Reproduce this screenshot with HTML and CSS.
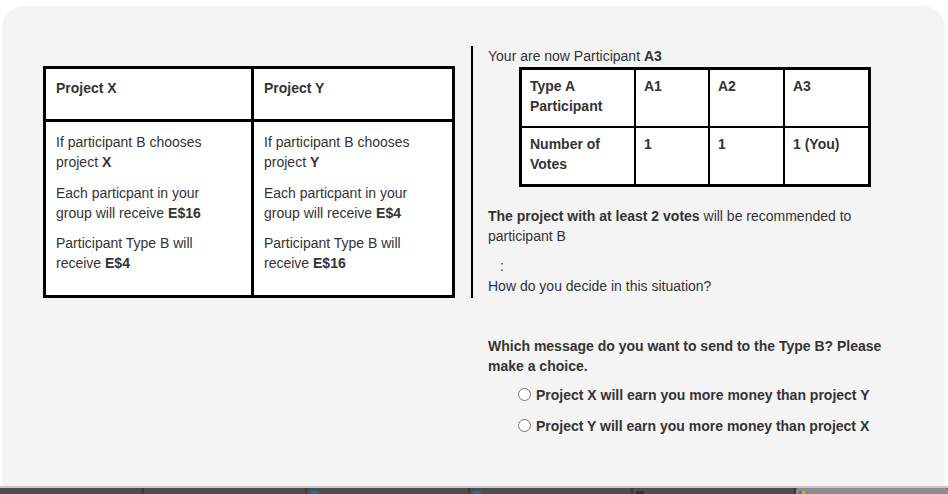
FILE: index.html
```html
<!DOCTYPE html>
<html>
<head>
<meta charset="utf-8">
<link rel="stylesheet" href="styles.css">
</head>
<body>
<div class="panel">
  <div class="left">
    <table class="proj">
      <tr class="head">
        <th class="c1">Project X</th>
        <th>Project Y</th>
      </tr>
      <tr>
        <td class="c1">
          <p>If participant B chooses project <b>X</b></p>
          <p>Each particpant in your group will receive <b>E$16</b></p>
          <p>Participant Type B will receive <b>E$4</b></p>
        </td>
        <td>
          <p>If participant B chooses project <b>Y</b></p>
          <p>Each particpant in your group will receive <b>E$4</b></p>
          <p>Participant Type B will receive <b>E$16</b></p>
        </td>
      </tr>
    </table>
  </div>
  <div class="right">
    <div class="line">Your are now Participant <b>A3</b></div>
    <table class="votes">
      <tr>
        <th class="v1">Type A Participant</th>
        <th class="v2">A1</th>
        <th class="v3">A2</th>
        <th class="v4">A3</th>
      </tr>
      <tr>
        <th>Number of Votes</th>
        <th>1</th>
        <th>1</th>
        <th>1 (You)</th>
      </tr>
    </table>
    <p class="rec"><b>The project with at least 2 votes</b> will be recommended to participant B</p>
    <div class="colon">:</div>
    <div class="line">How do you decide in this situation?</div>
    <p class="question">Which message do you want to send to the Type B? Please make a choice.</p>
    <label class="choice"><input type="radio" name="msg"><span>Project X will earn you more money than project Y</span></label>
    <label class="choice"><input type="radio" name="msg"><span>Project Y will earn you more money than project X</span></label>
  </div>
</div>
<div class="taskbar">
  <div class="tab"></div>
  <div class="tab"></div>
  <div class="tab"><i class="ico"></i></div>
  <div class="tab"><i class="ico"></i></div>
  <div class="tab"><i class="ico dark"></i></div>
  <div class="tab active"><i class="ico multi"></i></div>
</div>
</body>
</html>
```

FILE: styles.css
```css
html, body {
  margin: 0;
  padding: 0;
  background: #ffffff;
  font-family: "Liberation Sans", Arial, sans-serif;
  font-size: 14px;
  line-height: 20px;
  color: #333333;
  overflow: hidden;
}

.panel {
  margin: 6px 3px 0 2px;
  height: 480px;
  background: #f4f4f4;
  border-radius: 22px 22px 0 0;
  box-sizing: border-box;
  padding-top: 40px;
  display: flex;
  align-items: flex-start;
}

.left {
  padding: 20px 16px 0 41px;
  border-right: 2px solid #000;
}

table {
  border-collapse: collapse;
  background: #ffffff;
}

.proj {
  width: 412px;
  border: 3px solid #000;
}

.proj th, .proj td {
  border: 3px solid #000;
  text-align: left;
  vertical-align: top;
  padding: 10px 20px 0 10px;
}

.proj th.c1, .proj td.c1 {
  width: 175px;
}

.proj .head th {
  height: 41px;
  padding-top: 9px;
}

.proj td {
  padding-top: 10px;
  padding-bottom: 12px;
}

.proj p {
  margin: 0 0 11px 0;
}

.proj p:nth-child(2) {
  margin-bottom: 10px;
}

.proj p:last-child {
  margin-bottom: 10px;
}

.right {
  padding-left: 15px;
  width: 412px;
}

.line {
  height: 20px;
}

.votes {
  margin: 1px 0 0 31px;
  width: 352px;
  border: 3px solid #000;
}

.votes th {
  border: 2px solid #000;
  text-align: left;
  vertical-align: top;
  padding: 6px 8px 10px 8px;
  height: 39px;
}

.votes .v1 { width: 96px; }
.votes .v2 { width: 56px; }
.votes .v3 { width: 57px; }

.rec {
  margin: 19px 0 10px 0;
}

.colon {
  padding-left: 12px;
  height: 20px;
}

.question {
  font-weight: bold;
  margin: 40px 0 9px 0;
}

.choice {
  display: flex;
  align-items: center;
  font-weight: bold;
  margin-left: 30px;
  height: 20px;
  margin-bottom: 11px;
}

.choice input {
  margin: 0 5px 2px 0;
  width: 13px;
  height: 13px;
}

.taskbar {
  height: 6px;
  border-top: 2px solid #c9c9c9;
  background: #3a3a3a;
  display: flex;
}

.tab {
  width: 161px;
  margin-left: 2px;
  background: #4d4d4d;
  border-radius: 2px 2px 0 0;
  position: relative;
}

.tab:first-child {
  width: 142px;
  margin-left: 0;
}

.tab.active {
  flex: 1;
  background: #8c8c8c;
}

.ico {
  position: absolute;
  left: 3px;
  top: 3px;
  width: 8px;
  height: 3px;
  background: #1f6fa8;
}

.ico.dark {
  background: #333333;
}

.ico.multi {
  background: linear-gradient(90deg, #2f7fc0 0 3px, #e3a12a 3px 6px, #6aa84f 6px);
}
```
